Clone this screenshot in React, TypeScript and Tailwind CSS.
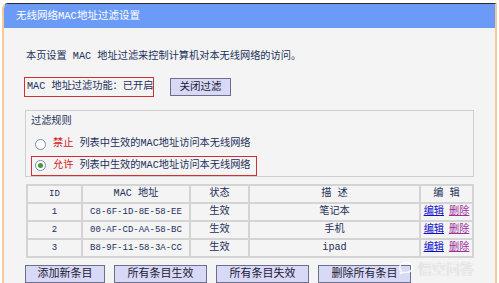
const rows = [
  { id: "1", mac: "C8-6F-1D-8E-58-EE", desc: "笔记本" },
  { id: "2", mac: "00-AF-CD-AA-58-BC", desc: "手机" },
  { id: "3", mac: "B8-9F-11-58-3A-CC", desc: "ipad" },
];

const Radio = ({ checked }: { checked?: boolean }) => (
  <span className="w-[11px] h-[11px] rounded-full border border-[#7f8ea6] bg-white flex items-center justify-center shrink-0">
    {checked && <span className="w-[5px] h-[5px] rounded-full bg-[#3f9a3f]" />}
  </span>
);

const Btn = ({ label, w }: { label: string; w: string }) => (
  <div
    className={`${w} h-[18px] bg-[#d8d8f7] border border-[#6d6d8c] flex items-center justify-center text-[#1b1b33] whitespace-nowrap`}
  >
    {label}
  </div>
);

export default function App() {
  return (
    <div className="w-[499px] h-[283px] bg-white relative overflow-hidden font-['Liberation_Mono','Noto_Sans_CJK_SC',monospace] text-[10.2px] text-[#23305a] leading-none whitespace-nowrap">
      <div className="ml-[2px] mt-[3px] w-[495px] h-[280px] flex flex-col rounded-tl-[6px] border-t border-t-[#2a2a2a] border-l-2 border-r-2 border-l-[#f6c89b] border-r-[#f6c89b] overflow-hidden">
        {/* Header */}
        <div className="h-[24px] bg-[#6b9bf7] text-white text-[10.5px] pl-[12px] flex items-center">
          无线网络MAC地址过滤设置
        </div>

        {/* Body */}
        <div className="flex-1 bg-[#f4f4f4] pl-[22px] pt-[23px] flex flex-col">
          <div className="h-[12px] flex items-center">本页设置 MAC 地址过滤来控制计算机对本无线网络的访问。</div>

          <div className="mt-[14px] flex items-center">
            <div className="h-[20px] w-[130px] -ml-[2px] border border-[#d03030] flex items-center pl-[2px]">
              MAC 地址过滤功能：已开启
            </div>
            <div className="ml-[16px] text-[10.5px]">
              <Btn label="关闭过滤" w="w-[61px]" />
            </div>
          </div>

          {/* Filter rules */}
          <div className="mt-[13px] w-[449px] h-[67px] -ml-[1px] border border-[#cfcfcf] flex flex-col pl-[5px] pt-[6px]">
            <div className="h-[12px] flex items-center">过滤规则</div>
            <div className="mt-[11px] h-[12px] flex items-center pl-[4px]">
              <Radio />
              <span className="text-[#d01818] ml-[7px]">禁止</span>
              <span className="ml-[6px]">列表中生效的MAC地址访问本无线网络</span>
            </div>
            <div className="mt-[6px] w-[226px] h-[22px] border border-[#d03030] flex items-center pl-[3px]">
              <Radio checked />
              <span className="text-[#d01818] ml-[7px]">允许</span>
              <span className="ml-[6px]">列表中生效的MAC地址访问本无线网络</span>
            </div>
          </div>

          {/* Table */}
          <table className="mt-[7px] w-[448px] border-collapse border-2 border-[#d4d4d4] text-center">
            <tbody>
              <tr className="h-[18px]">
                <td className="w-[55px] border-2 border-[#d4d4d4] text-[9px]">ID</td>
                <td className="w-[108px] border-2 border-[#d4d4d4]">MAC 地址</td>
                <td className="w-[59px] border-2 border-[#d4d4d4]">状态</td>
                <td className="w-[171px] border-2 border-[#d4d4d4]">描 述</td>
                <td className="border-2 border-[#d4d4d4]">编 辑</td>
              </tr>
              {rows.map((r) => (
                <tr key={r.id} className="h-[18px]">
                  <td className="border-2 border-[#d4d4d4] text-[9px]">{r.id}</td>
                  <td className="border-2 border-[#d4d4d4] text-[9px]">{r.mac}</td>
                  <td className="border-2 border-[#d4d4d4]">生效</td>
                  <td className="border-2 border-[#d4d4d4]">{r.desc}</td>
                  <td className="border-2 border-[#d4d4d4]">
                    <span className="text-[#1010c8] underline">编辑</span>
                    <span className="text-[#a0309a] underline ml-[5px]">删除</span>
                  </td>
                </tr>
              ))}
            </tbody>
          </table>

          {/* Buttons */}
          <div className="mt-[7px] flex gap-[9px] -ml-[1px] text-[11px]">
            <Btn label="添加新条目" w="w-[80px]" />
            <Btn label="所有条目生效" w="w-[93px]" />
            <Btn label="所有条目失效" w="w-[93px]" />
            <Btn label="删除所有条目" w="w-[93px]" />
          </div>
        </div>
      </div>

      {/* Watermark */}
      <div className="absolute left-[398px] top-[261px] flex items-center gap-[4px] text-white/80 text-[14px] [text-shadow:0_0_1px_#aaa]">
        <svg width="16" height="14" viewBox="0 0 16 14" fill="none" stroke="white" strokeOpacity="0.85" strokeWidth="1.5">
          <path d="M8 1.5c3.6 0 6.3 2.2 6.3 5s-2.7 5-6.3 5c-.8 0-1.5-.1-2.2-.3L2.5 12.5l.9-2.6C2.3 9 1.7 7.8 1.7 6.5c0-2.8 2.7-5 6.3-5z" />
        </svg>
        <span className="font-['Noto_Sans_CJK_SC',sans-serif]">悟空问答</span>
      </div>
    </div>
  );
}
